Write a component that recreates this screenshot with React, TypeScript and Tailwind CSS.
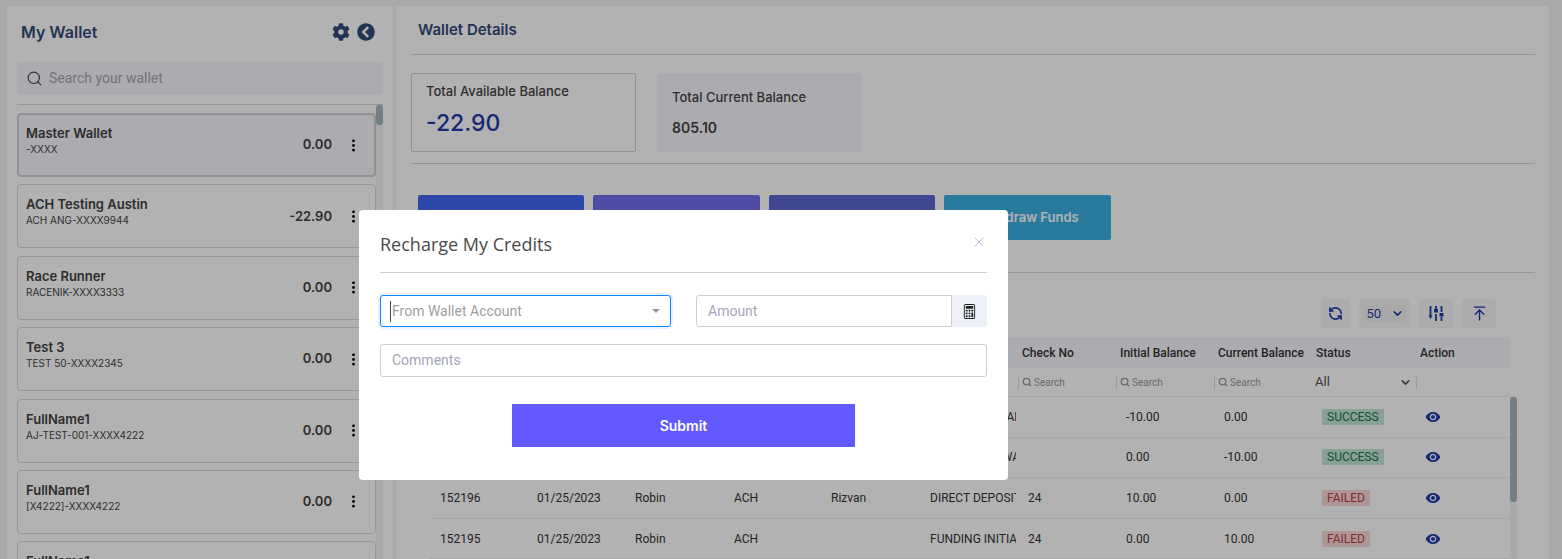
import { ChevronDown, Search, X } from 'lucide-react';
import { FaCog, FaChevronCircleLeft } from 'react-icons/fa';
import { BsCalculator, BsThreeDotsVertical } from 'react-icons/bs';
import { MdRemoveRedEye } from 'react-icons/md';
import { LuArrowUpToLine, LuRefreshCcw } from 'react-icons/lu';

const wallets = [
  { name: 'Master Wallet', sub: '-XXXX', amount: '0.00', active: true },
  { name: 'ACH Testing Austin', sub: 'ACH ANG-XXXX9944', amount: '-22.90' },
  { name: 'Race Runner', sub: 'RACENIK-XXXX3333', amount: '0.00' },
  { name: 'Test 3', sub: 'TEST 50-XXXX2345', amount: '0.00' },
  { name: 'FullName1', sub: 'AJ-TEST-001-XXXX4222', amount: '0.00' },
  { name: 'FullName1', sub: '[X4222]-XXXX4222', amount: '0.00' },
  { name: 'FullName1', sub: '-XXXX', amount: '0.00' },
];

const rows = [
  { id: '152198', date: '01/25/2023', user: 'Robin', type: 'ACH', by: '', desc: 'WALLET TO WALLET CREDIT', check: '', initial: '-10.00', current: '0.00', status: 'SUCCESS' },
  { id: '152197', date: '01/25/2023', user: 'Robin', type: 'ACH', by: '', desc: 'FUNDING TO WALLET FULL', check: '', initial: '0.00', current: '-10.00', status: 'SUCCESS' },
  { id: '152196', date: '01/25/2023', user: 'Robin', type: 'ACH', by: 'Rizvan', desc: 'DIRECT DEPOSIT', check: '24', initial: '10.00', current: '0.00', status: 'FAILED' },
  { id: '152195', date: '01/25/2023', user: 'Robin', type: 'ACH', by: '', desc: 'FUNDING INITIATED', check: '24', initial: '0.00', current: '10.00', status: 'FAILED' },
];

const headers = ['ID', 'Date', 'Name', 'Type', 'Created By', 'Description', 'Check No', 'Initial Balance', 'Current Balance'];

function WalletCard({ name, sub, amount, active }: { name: string; sub: string; amount: string; active?: boolean }) {
  return (
    <div
      className={
        active
          ? 'flex h-[64px] shrink-0 items-center rounded-[4px] border-2 border-[#cfcfd4] bg-[#f7f7fd] pl-[7px] pr-[13px]'
          : 'flex h-[64px] shrink-0 items-center rounded-[4px] border border-[#d8d8d8] pl-[8px] pr-[14px]'
      }
    >
      <div className="min-w-0 flex-1 -translate-y-[5px]">
        <div className="text-[13px] leading-[18px] font-semibold text-[#3f3f3f]">{name}</div>
        <div className="text-[10px] leading-[14px] text-[#454545]">{sub}</div>
      </div>
      <div className="text-[13px] font-semibold text-[#3f3f3f]">{amount}</div>
      <BsThreeDotsVertical className="ml-[14px] text-[15px] text-black" />
    </div>
  );
}

function FilterCell() {
  return (
    <div className="flex items-center gap-[2px] border-l border-[#e3e3e3] pl-[3px] text-[10px] text-[#9a9a9a]">
      <Search size={10} strokeWidth={3} />
      <span>Search</span>
    </div>
  );
}

export default function App() {
  return (
    <div className="relative flex h-screen w-full overflow-hidden bg-[#f3f3f3] pt-[6px] pl-[7px] font-[Inter,sans-serif]">
      {/* left wallet list */}
      <aside className="flex h-[560px] w-[386px] shrink-0 flex-col bg-white px-[10px]">
        <div className="flex h-[50px] shrink-0 items-center justify-between pt-[1px] pr-[8px] pl-[4px]">
          <h2 className="text-[16px] font-semibold text-[#324b77]">My Wallet</h2>
          <div className="flex items-center gap-[7px] text-[#324b77]">
            <FaCog className="text-[18px]" />
            <FaChevronCircleLeft className="text-[18px]" />
          </div>
        </div>
        <div className="mt-[5px] flex h-[34px] shrink-0 items-center gap-[6px] rounded-[2px] bg-[#f7f7fd] pl-[9px]">
          <Search size={17} strokeWidth={1.6} className="text-[#444]" />
          <span className="font-[Roboto,sans-serif] text-[14px] text-[#a4a4ac]">Search your wallet</span>
        </div>
        <div className="mt-[9px] h-px shrink-0 bg-[#d6d6d6]" />
        <div className="flex min-h-0 flex-1">
          <div className="flex flex-1 flex-col gap-[7.4px] overflow-hidden pt-[8px]">
            {wallets.map((w, i) => (
              <WalletCard key={i} {...w} />
            ))}
          </div>
          <div className="w-[7px] shrink-0 bg-[#f2f2f2]">
            <div className="h-[20px] rounded-[3px] bg-[#a6b6bf]" />
          </div>
        </div>
      </aside>

      {/* right details */}
      <main className="ml-[3px] flex h-[560px] w-[1153px] shrink-0 flex-col bg-white pl-[15px] font-[Inter,sans-serif]">
        <div className="flex h-[49px] w-[1124px] shrink-0 items-center border-b border-[#d6d6d6] pl-[7px]">
          <h2 className="text-[15px] font-semibold text-[#324b77]">Wallet Details</h2>
        </div>
        <div className="flex h-[109px] w-[1124px] shrink-0 gap-[21px] border-b border-[#d6d6d6] pt-[18px]">
          <div className="h-[79px] w-[225px] rounded-[2px] border border-[#d2d2d2] pt-[8px] pl-[14px]">
            <div className="text-[13px] leading-[18px] font-medium text-[#444]">Total Available Balance</div>
            <div className="mt-[7px] text-[23px] leading-[32px] font-medium text-[#1d3ba8]">-22.90</div>
          </div>
          <div className="h-[79px] w-[204px] rounded-[2px] bg-[#f7f7fd] pt-[15px] pl-[15px]">
            <div className="text-[13px] leading-[18px] font-medium text-[#444]">Total Current Balance</div>
            <div className="mt-[12px] text-[14px] leading-[20px] font-semibold text-[#444]">805.10</div>
          </div>
        </div>
        <div className="flex h-[109px] w-[1124px] shrink-0 gap-[9px] border-b border-[#d6d6d6] pt-[31px] pl-[7px]">
          <button className="h-[45px] w-[166px] rounded-[2px] bg-[#4368f3] text-[13px] font-semibold text-white">Add Funds</button>
          <button className="h-[45px] w-[167px] rounded-[2px] bg-[#716eec] text-[13px] font-semibold text-white">Transfer Funds</button>
          <button className="h-[45px] w-[166px] rounded-[2px] bg-[#5e67d1] text-[13px] font-semibold text-white">Recharge Credits</button>
          <button className="h-[45px] w-[167px] rounded-[2px] bg-[#3cb0e3] text-[13px] font-semibold text-white">Withdraw Funds</button>
        </div>

        {/* toolbar */}
        <div className="flex h-[64px] w-[1092px] shrink-0 items-start justify-end gap-[9px] pt-[26px] pr-[-0px] text-[#1d3ba8]">
          <div className="flex h-[29px] w-[29px] items-center justify-center rounded-[2px] bg-[#f7f7f7]">
            <LuRefreshCcw className="text-[15px]" strokeWidth={2.6} />
          </div>
          <div className="flex h-[29px] w-[51px] items-center justify-center rounded-[2px] bg-[#f7f7f7]">
            <div className="flex h-[17px] w-[42px] items-center justify-between bg-[#f1f1f1] pr-[2px] pl-[3px] font-[Roboto,sans-serif] text-[13px]">
              50
              <ChevronDown size={13} strokeWidth={3} />
            </div>
          </div>
          <div className="flex h-[29px] w-[34px] items-center justify-center rounded-[2px] bg-[#f7f7f7]">
            <svg width="16" height="15" viewBox="0 0 16 15" fill="none" stroke="currentColor" strokeWidth="1.8">
              <path d="M2.5 0v11M8 0v3M8 8v7M13.5 0v6M13.5 11v4" />
              <path d="M0.5 9.5h4L2.5 13zM6 3h4v3.5H6zM11.5 7h4v3.5h-4z" fill="currentColor" stroke="none" />
            </svg>
          </div>
          <div className="mr-[7px] flex h-[29px] w-[34px] items-center justify-center rounded-[2px] bg-[#f7f7f7]">
            <LuArrowUpToLine className="text-[17px]" strokeWidth={2} />
          </div>
        </div>

        {/* table */}
        <div className="ml-[19px] w-[1080px] font-[Roboto,sans-serif] text-[12px] text-[#333]">
          <div className="grid h-[31px] grid-cols-[repeat(9,98px)_104px_94px] items-center bg-[#f7f7fd] font-medium">
            {headers.map((h) => (
              <div key={h} className="pl-[4px] whitespace-nowrap">{h}</div>
            ))}
            <div className="pl-[4px]">Status</div>
            <div className="pl-[4px]">Action</div>
          </div>
          <div className="grid h-[29px] grid-cols-[repeat(9,98px)_104px_94px] items-center border-b border-[#e8e8e8]">
            {headers.map((h) => (
              <FilterCell key={h} />
            ))}
            <div className="flex items-center justify-between pr-[4px] pl-[3px] text-[13px] text-[#555]">
              All
              <ChevronDown size={13} strokeWidth={3} />
            </div>
            <div className="h-[13px] border-l border-[#e3e3e3]" />
          </div>
        </div>
        <div className="ml-[19px] flex min-h-0 flex-1 font-[Roboto,sans-serif] text-[12px] text-[#333]">
          <div className="w-[1080px] shrink-0">
            {rows.map((r) => (
              <div key={r.id} className="grid h-[40.6px] grid-cols-[repeat(9,98px)_104px_94px] items-center border-b border-[#f0f0f0]">
                <div className="pl-[10px]">{r.id}</div>
                <div className="pl-[9px]">{r.date}</div>
                <div className="pl-[9px]">{r.user}</div>
                <div className="pl-[10px]">{r.type}</div>
                <div className="pl-[9px]">{r.by}</div>
                <div className="w-[96px] overflow-hidden pl-[10px] whitespace-nowrap">{r.desc}</div>
                <div className="pl-[10px]">{r.check}</div>
                <div className="pl-[10px]">{r.initial}</div>
                <div className="pl-[10px]">{r.current}</div>
                <div className="pl-[10px]">
                  <span
                    className={
                      r.status === 'SUCCESS'
                        ? 'inline-block h-[16px] rounded-[1px] bg-[#c3e6d6] px-[5px] leading-[17px] text-[#1f6e4e]'
                        : 'inline-block h-[16px] rounded-[1px] bg-[#f7d7d7] px-[5px] leading-[17px] text-[#c43d3d]'
                    }
                  >
                    {r.status}
                  </span>
                </div>
                <div className="pl-[9px]">
                  <MdRemoveRedEye className="text-[16px] text-[#1d3ba8]" />
                </div>
              </div>
            ))}
          </div>
          <div className="w-[7px] shrink-0 bg-[#f2f2f2]">
            <div className="h-[105px] rounded-[3px] bg-[#a6b6bf]" />
          </div>
        </div>
      </main>

      {/* backdrop + modal */}
      <div className="absolute inset-0 flex items-start bg-black/30 pt-[210px] pl-[359px]">
        <div className="h-[270px] w-[649px] rounded-[4px] bg-white px-[21px]">
          <div className="flex h-[63px] items-center justify-between border-b border-[#cfcfcf] pt-[6px]">
            <h3 className="font-['Open_Sans',sans-serif] text-[18px] font-medium text-[#4a4a4a]">Recharge My Credits</h3>
            <X size={16} strokeWidth={1.4} className="mb-[4px] text-[#b9bbd6]" />
          </div>
          <div className="mt-[22px] flex gap-[25px] font-[Roboto,sans-serif] text-[14px]">
            <div className="flex h-[32px] w-[291px] items-center justify-between rounded-[3px] border border-[#0a84ff] pr-[10px] pl-[9px] text-[#a0a0a0] shadow-[0_0_0_2px_#e6f2ff]">
              <span className="border-l border-[#444] pl-[1px]">From Wallet Account</span>
              <span className="h-0 w-0 border-x-[4px] border-t-[4px] border-x-transparent border-t-[#999]" />
            </div>
            <div className="flex h-[32px] flex-1">
              <div className="flex flex-1 items-center rounded-l-[3px] border border-[#cfcfcf] pl-[11px] text-[#a4a7b8]">Amount</div>
              <div className="flex w-[35px] items-center justify-center rounded-r-[3px] bg-[#eef0fa] text-[#222]">
                <BsCalculator className="text-[15px]" />
              </div>
            </div>
          </div>
          <div className="mt-[17px] flex h-[33px] items-center rounded-[3px] border border-[#cfcfcf] pl-[11px] font-[Roboto,sans-serif] text-[14px] text-[#a4a7b8]">
            Comments
          </div>
          <div className="mt-[27px] flex justify-center">
            <button className="h-[43px] w-[343px] bg-[#6259ff] font-[Inter,sans-serif] text-[14px] font-semibold text-white">Submit</button>
          </div>
        </div>
      </div>
    </div>
  );
}
